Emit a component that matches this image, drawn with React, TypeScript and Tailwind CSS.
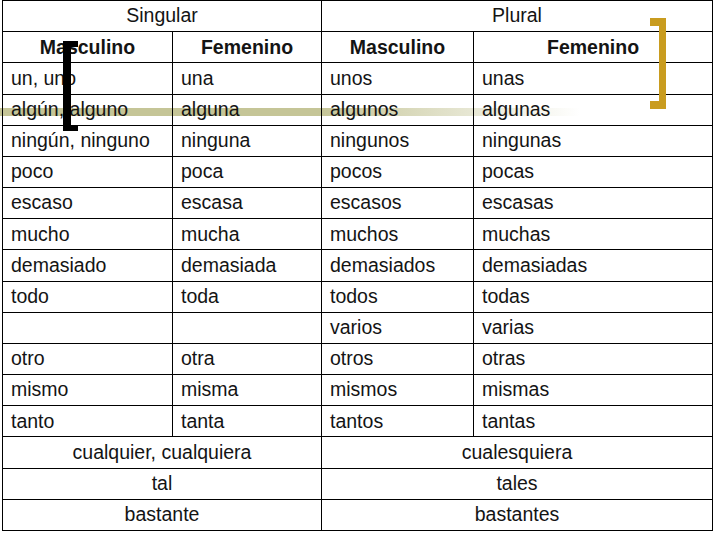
import React from "react";

const rows: [string, string, string, string][] = [
  ["un, uno", "una", "unos", "unas"],
  ["algún, alguno", "alguna", "algunos", "algunas"],
  ["ningún, ninguno", "ninguna", "ningunos", "ningunas"],
  ["poco", "poca", "pocos", "pocas"],
  ["escaso", "escasa", "escasos", "escasas"],
  ["mucho", "mucha", "muchos", "muchas"],
  ["demasiado", "demasiada", "demasiados", "demasiadas"],
  ["todo", "toda", "todos", "todas"],
  ["", "", "varios", "varias"],
  ["otro", "otra", "otros", "otras"],
  ["mismo", "misma", "mismos", "mismas"],
  ["tanto", "tanta", "tantos", "tantas"],
];

const merged: [string, string][] = [
  ["cualquier, cualquiera", "cualesquiera"],
  ["tal", "tales"],
  ["bastante", "bastantes"],
];

const cell = "border border-black px-2 py-0 align-middle";
const row = "h-[31.18px]";

export default function App() {
  return (
    <div className="relative h-[540px] w-[720px] overflow-hidden bg-white text-[19.5px] leading-none text-[#141414] [font-family:'Liberation_Sans',Arial,sans-serif]">
      {/* olive highlight line behind the table */}
      <div className="absolute left-0 top-[108px] h-[8px] w-[580px] bg-gradient-to-r from-[#c5c597] from-55% to-[#c5c597]/0" />

      <table className="relative ml-[2px] w-[710px] table-fixed border-collapse">
        <colgroup>
          <col className="w-[170px]" />
          <col className="w-[149px]" />
          <col className="w-[152px]" />
          <col className="w-[239px]" />
        </colgroup>
        <tbody>
          <tr className={row}>
            <td colSpan={2} className={`${cell} text-center`}>Singular</td>
            <td colSpan={2} className={`${cell} text-center`}>Plural</td>
          </tr>
          <tr className={`${row} font-bold`}>
            <td className={`${cell} text-center`}>Masculino</td>
            <td className={`${cell} text-center`}>Femenino</td>
            <td className={`${cell} text-center`}>Masculino</td>
            <td className={`${cell} text-center`}>Femenino</td>
          </tr>
          {rows.map((r, i) => (
            <tr key={i} className={row}>
              {r.map((t, j) => (
                <td key={j} className={cell}>{t}</td>
              ))}
            </tr>
          ))}
          {merged.map(([s, p]) => (
            <tr key={s} className={row}>
              <td colSpan={2} className={`${cell} text-center`}>{s}</td>
              <td colSpan={2} className={`${cell} text-center`}>{p}</td>
            </tr>
          ))}
        </tbody>
      </table>

      {/* black bracket */}
      <div className="absolute left-[63px] top-[41px] h-[90px] w-[15px] border-y-[6px] border-l-[8px] border-black" />
      {/* gold bracket */}
      <div className="absolute left-[650px] top-[18px] h-[91px] w-[16px] border-y-[8px] border-r-[7px] border-[#c99c1f]" />
    </div>
  );
}
